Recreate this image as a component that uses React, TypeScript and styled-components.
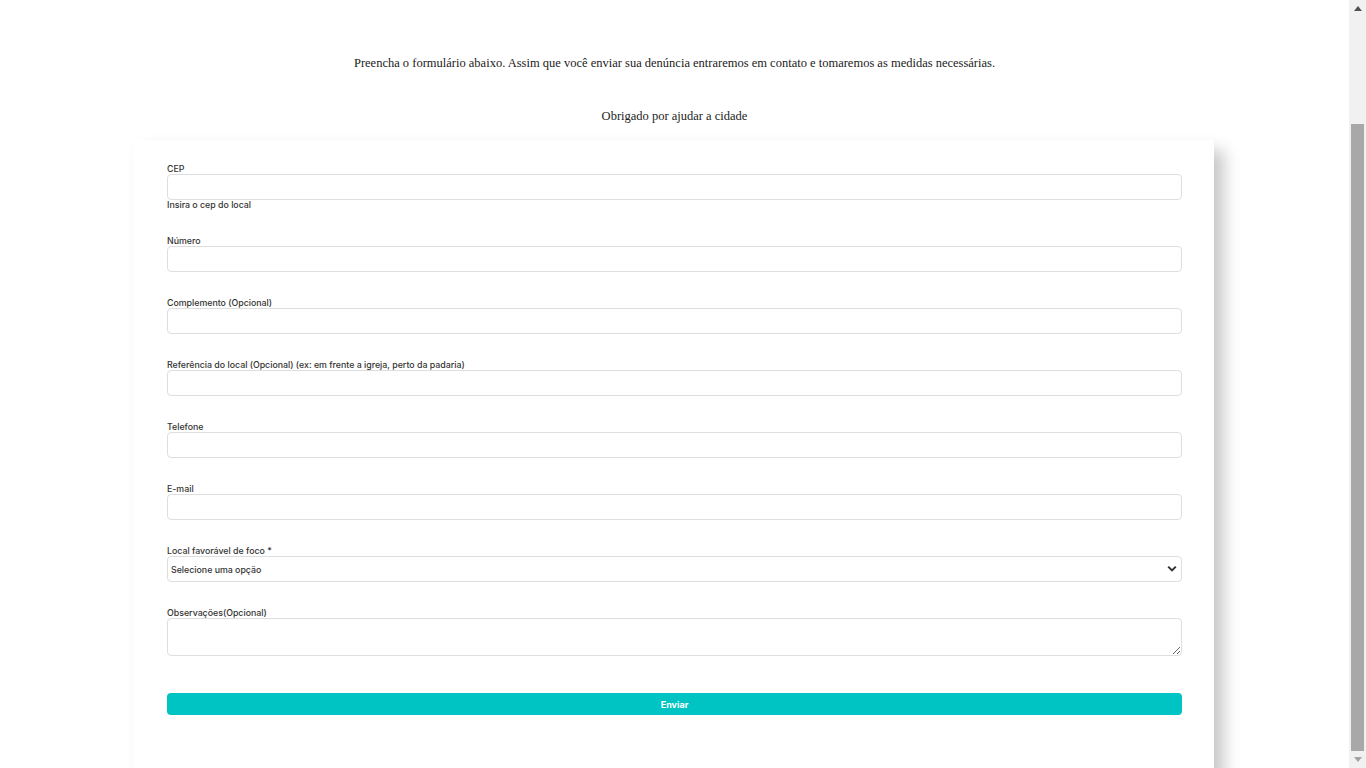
import React from "react";
import styled, { createGlobalStyle } from "styled-components";

const Global = createGlobalStyle`
  html, body { margin: 0; padding: 0; background: #fff; overflow: hidden; }
  body { font-family: "Liberation Serif", serif; }
  * { box-sizing: border-box; }
`;

const Viewport = styled.div`
  display: flex;
  height: 100vh;
  overflow: hidden;
`;

const Main = styled.main`
  flex: 1;
  min-width: 0;
  height: 100%;
  overflow: hidden;
  display: flex;
  flex-direction: column;
  align-items: center;
`;

const Intro = styled.p`
  margin: 56px 0 0;
  font-family: "Liberation Serif", serif;
  font-size: 12.5px;
  line-height: 15px;
  color: #222;
  text-align: center;
`;

const Thanks = styled(Intro)`
  margin-top: 38px;
`;

const Card = styled.form`
  margin: 16px 0 0 -2px;
  width: 1081px;
  flex-shrink: 0;
  padding: 24px 32px 64px 34px;
  background: #fff;
  box-shadow: 10px 10px 15px rgba(0, 0, 0, 0.22);
  display: flex;
  flex-direction: column;
  font-family: "Inter", "Liberation Sans", sans-serif;
`;

const Group = styled.div`
  display: flex;
  flex-direction: column;
  margin-bottom: 26px;
`;

const Label = styled.label`
  display: block;
  font-size: 8.8px;
  line-height: 10px;
  font-weight: 500;
  color: #333;
`;

const Help = styled.span`
  display: block;
  font-size: 8.8px;
  line-height: 10px;
  font-weight: 500;
  color: #333;
`;

const fieldBox = `
  display: block;
  width: 100%;
  border: 1px solid #dedede;
  border-radius: 4px;
  background: #fff;
  outline: none;
`;

const Input = styled.input`
  ${fieldBox}
  height: 26px;
  padding: 0 4px;
  font-size: 9px;
`;

const SelectWrap = styled.div`
  position: relative;
  width: 100%;
  height: 26px;
`;

const Select = styled.select`
  ${fieldBox}
  appearance: none;
  height: 26px;
  padding: 0 3px;
  font-family: "Inter", "Liberation Sans", sans-serif;
  font-size: 8.8px;
  font-weight: 500;
  color: #333;
`;

const Chevron = styled.svg`
  position: absolute;
  right: 5px;
  top: 9px;
  width: 10px;
  height: 8px;
  pointer-events: none;
`;

const TextArea = styled.textarea`
  ${fieldBox}
  height: 38px;
  resize: vertical;
  font-size: 9px;
`;

const Button = styled.button`
  margin-top: 11px;
  width: 100%;
  height: 22px;
  border: none;
  border-radius: 4px;
  background: #00c4c4;
  color: #fff;
  font-family: "Inter", "Liberation Sans", sans-serif;
  font-size: 9px;
  font-weight: 700;
  cursor: pointer;
`;

const ScrollBar = styled.div`
  width: 17px;
  flex-shrink: 0;
  height: 100%;
  background: #f1f1f1;
  display: flex;
  flex-direction: column;
`;

const ArrowBox = styled.div`
  height: 17px;
  flex-shrink: 0;
  display: flex;
  align-items: center;
  justify-content: center;
`;

const Track = styled.div`
  flex: 1;
  display: flex;
  flex-direction: column;
  justify-content: flex-end;
  padding: 0 2px;
`;

const Thumb = styled.div`
  height: 627px;
  background: #a8a8a8;
`;

const fields = [
  "Número",
  "Complemento (Opcional)",
  "Referência do local (Opcional) (ex: em frente a igreja, perto da padaria)",
  "Telefone",
  "E-mail",
];

export default function App() {
  return (
    <>
      <Global />
      <Viewport>
        <Main>
          <Intro>
            Preencha o formulário abaixo. Assim que você enviar sua denúncia entraremos em contato e tomaremos as medidas necessárias.
          </Intro>
          <Thanks>Obrigado por ajudar a cidade</Thanks>
          <Card onSubmit={(e) => e.preventDefault()}>
            <Group>
              <Label>CEP</Label>
              <Input type="text" />
              <Help>Insira o cep do local</Help>
            </Group>
            {fields.map((f) => (
              <Group key={f}>
                <Label>{f}</Label>
                <Input type="text" />
              </Group>
            ))}
            <Group>
              <Label>Local favorável de foco *</Label>
              <SelectWrap>
                <Select defaultValue="">
                  <option value="">Selecione uma opção</option>
                </Select>
                <Chevron viewBox="0 0 10 8">
                  <path d="M1.2 1.6 L5 5.4 L8.8 1.6" fill="none" stroke="#333" strokeWidth="2" />
                </Chevron>
              </SelectWrap>
            </Group>
            <Group>
              <Label>Observações(Opcional)</Label>
              <TextArea />
            </Group>
            <Button type="submit">Enviar</Button>
          </Card>
        </Main>
        <ScrollBar>
          <ArrowBox>
            <svg width="8" height="5" viewBox="0 0 8 5">
              <path d="M0 5 L4 0 L8 5 Z" fill="#505050" />
            </svg>
          </ArrowBox>
          <Track>
            <Thumb />
          </Track>
          <ArrowBox>
            <svg width="8" height="5" viewBox="0 0 8 5">
              <path d="M0 0 L8 0 L4 5 Z" fill="#a3a3a3" />
            </svg>
          </ArrowBox>
        </ScrollBar>
      </Viewport>
    </>
  );
}
